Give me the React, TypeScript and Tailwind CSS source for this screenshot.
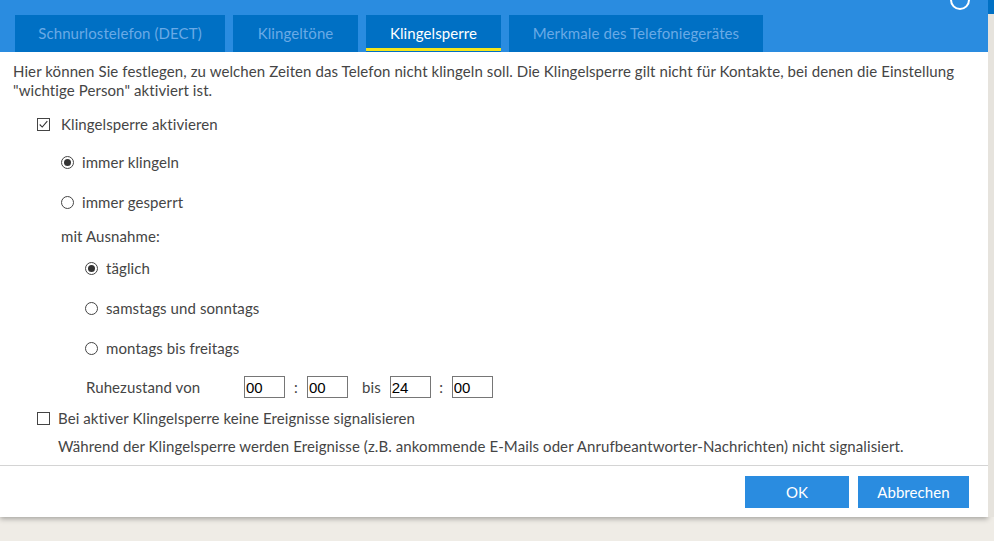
import { useState } from 'react';

type Tab = { id: string; label: string; w: string };

const TABS: Tab[] = [
  { id: 'dect', label: 'Schnurlostelefon (DECT)', w: 'w-[210px]' },
  { id: 'toene', label: 'Klingeltöne', w: 'w-[125px]' },
  { id: 'sperre', label: 'Klingelsperre', w: 'w-[135px]' },
  { id: 'merkmale', label: 'Merkmale des Telefoniegerätes', w: 'w-[254px]' },
];

function Radio({ checked, label, onSelect }: { checked: boolean; label: string; onSelect: () => void }) {
  return (
    <label className="h-[20px] flex items-center gap-[8px] cursor-pointer" onClick={onSelect}>
      <span className="w-[13px] h-[13px] rounded-full border border-[#444] flex items-center justify-center bg-white">
        {checked && <span className="w-[7px] h-[7px] rounded-full bg-[#333]" />}
      </span>
      <span>{label}</span>
    </label>
  );
}

function Check({ checked, label, gap, onToggle }: { checked: boolean; label: string; gap: string; onToggle: () => void }) {
  return (
    <label className={`h-[20px] flex items-center ${gap} cursor-pointer`} onClick={onToggle}>
      <span className="w-[13px] h-[13px] border border-[#444] flex items-center justify-center bg-white">
        {checked && (
          <svg viewBox="0 0 13 13" className="w-[11px] h-[11px]">
            <path d="M2 6.5 L5 9.5 L11 2.5" fill="none" stroke="#333" strokeWidth="1.3" />
          </svg>
        )}
      </span>
      <span>{label}</span>
    </label>
  );
}

function TimeInput({ value }: { value: string }) {
  return (
    <input
      defaultValue={value}
      className="w-[41px] h-[22px] border border-[#767676] px-[1px] text-[15px] tracking-normal text-black bg-white outline-none"
      style={{ fontFamily: 'Arial, "Liberation Sans", sans-serif' }}
    />
  );
}

export default function App() {
  const [tab, setTab] = useState('sperre');
  const [active, setActive] = useState(true);
  const [mode, setMode] = useState<'klingeln' | 'gesperrt'>('klingeln');
  const [days, setDays] = useState<'taeglich' | 'wochenende' | 'werktage'>('taeglich');
  const [silent, setSilent] = useState(false);

  return (
    <div
      className="w-[994px] h-[541px] bg-[#efece6] overflow-hidden text-[15px] leading-[20px] tracking-[0.09px] text-[#454545]"
      style={{ fontFamily: 'Lato, "Open Sans", sans-serif' }}
    >
      <div className="flex h-[517px]">
        <div className="w-[988px] bg-white shadow-[0_2px_5px_rgba(0,0,0,0.3)] flex flex-col">
          {/* Reiterleiste */}
          <div className="h-[52px] shrink-0 bg-[#2a8ce0] flex items-end gap-[8px] pl-[15px] relative">
            <span className="absolute right-[18px] -top-[10px] w-[20px] h-[20px] rounded-full border-2 border-white" />
            {TABS.map(t => (
              <button
                key={t.id}
                onClick={() => setTab(t.id)}
                className={`${t.w} h-[37px] pb-[2px] bg-[#0070c4] flex items-center justify-center relative ${
                  tab === t.id ? 'text-white' : 'text-[#6aaae6]'
                }`}
              >
                {t.label}
                {tab === t.id && <span className="absolute left-0 right-0 bottom-[1px] h-[3px] bg-[#f5e51b]" />}
              </button>
            ))}
          </div>

          <div className="px-[13px] pt-[10px] leading-[19px] shrink-0">
            <p>
              Hier können Sie festlegen, zu welchen Zeiten das Telefon nicht klingeln soll. Die Klingelsperre gilt nicht für Kontakte, bei denen die Einstellung "wichtige Person" aktiviert ist.
            </p>
          </div>

          <div className="pl-[37px] pt-[14px] flex flex-col shrink-0">
            <Check checked={active} gap="gap-[11px]" label="Klingelsperre aktivieren" onToggle={() => setActive(!active)} />
            <div className="pl-[24px] flex flex-col">
              <div className="mt-[18px]"><Radio checked={mode === 'klingeln'} label="immer klingeln" onSelect={() => setMode('klingeln')} /></div>
              <div className="mt-[20px]"><Radio checked={mode === 'gesperrt'} label="immer gesperrt" onSelect={() => setMode('gesperrt')} /></div>
              <div className="mt-[14px] h-[20px]">mit Ausnahme:</div>
              <div className="pl-[24px] flex flex-col">
                <div className="mt-[12px]"><Radio checked={days === 'taeglich'} label="täglich" onSelect={() => setDays('taeglich')} /></div>
                <div className="mt-[20px]"><Radio checked={days === 'wochenende'} label="samstags und sonntags" onSelect={() => setDays('wochenende')} /></div>
                <div className="mt-[20px]"><Radio checked={days === 'werktage'} label="montags bis freitags" onSelect={() => setDays('werktage')} /></div>
                <div className="mt-[18px] h-[22px] flex items-center">
                  <span className="w-[159px] pl-[1px]">Ruhezustand von</span>
                  <TimeInput value="00" />
                  <span className="w-[22px] text-center">:</span>
                  <TimeInput value="00" />
                  <span className="ml-[14px] mr-[9px]">bis</span>
                  <TimeInput value="24" />
                  <span className="w-[21px] text-center">:</span>
                  <TimeInput value="00" />
                </div>
              </div>
            </div>
            <div className="mt-[10px]">
              <Check checked={silent} gap="gap-[8px]" label="Bei aktiver Klingelsperre keine Ereignisse signalisieren" onToggle={() => setSilent(!silent)} />
            </div>
            <p className="pl-[21px] mt-[8px]">
              Während der Klingelsperre werden Ereignisse (z.B. ankommende E-Mails oder Anrufbeantworter-Nachrichten) nicht signalisiert.
            </p>
          </div>

          <div className="mt-auto shrink-0 border-t border-[#d4d4d4] h-[52px] flex items-center justify-end gap-[9px] pr-[19px]">
            <button className="w-[104px] h-[32px] bg-[#2a8ce0] text-white">OK</button>
            <button className="w-[111px] h-[32px] bg-[#2a8ce0] text-white">Abbrechen</button>
          </div>
        </div>
        <div className="flex-1 flex flex-col">
          <div className="h-[14px] bg-[#0070c4]" />
          <div className="flex-1 bg-[#e6e3dd]" />
        </div>
      </div>
    </div>
  );
}
